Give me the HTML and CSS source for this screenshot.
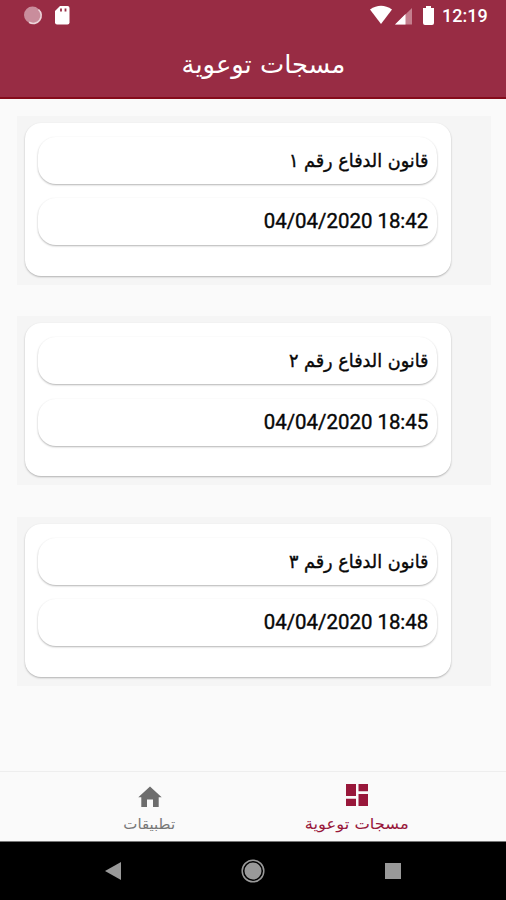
FILE: index.html
```html
<!DOCTYPE html>
<html lang="ar">
<head>
<meta charset="utf-8">
<title>مسجات توعوية</title>
<link rel="stylesheet" href="styles.css">
</head>
<body>
<header class="header">
  <div class="status">
    <svg class="status-left" width="52" height="24" viewBox="0 0 52 24"><circle cx="8.500" cy="15" r="8.500" fill="#c98d9c"/><path d="M14.500 9.500A8 8 0 0 1 5 22.300" fill="none" stroke="#ecd5da" stroke-width="1.6"/><path d="M36 6h7.500q2 0 2 2v14.500q0 2-2 2H33q-2 0-2-2V11Z" fill="#fff"/><path d="M37 8.500v3M41.500 8.500v3" stroke="#982c44" stroke-width="1.800"/></svg>
    <svg class="status-right" width="66" height="26" viewBox="0 0 66 26"><path d="M0 9.500Q11 2 22 9.500L11 24Z" fill="#fff"/><path d="M42 8v16.500H25Z" fill="#c47f8e"/><path d="M35.500 14v10.500H25Z" fill="#fff"/><path d="M56 6h5v2h3v15q0 2-2 2h-7q-2 0-2-2V8h3Z" fill="#fff"/></svg>
    <span class="clock">12:19</span>
  </div>
  <h1 class="title" dir="rtl"><span>مسجات توعوية</span></h1>
</header>
<main class="list">
  <section class="row"><article class="card">
    <div class="pill" dir="rtl"><span class="name">قانون الدفاع رقم ١</span></div>
    <div class="pill"><time class="date">04/04/2020 18:42</time></div>
  </article></section>
  <section class="row"><article class="card">
    <div class="pill" dir="rtl"><span class="name">قانون الدفاع رقم ٢</span></div>
    <div class="pill"><time class="date">04/04/2020 18:45</time></div>
  </article></section>
  <section class="row"><article class="card">
    <div class="pill" dir="rtl"><span class="name">قانون الدفاع رقم ٣</span></div>
    <div class="pill"><time class="date">04/04/2020 18:48</time></div>
  </article></section>
</main>
<nav class="tabs">
  <a class="tab home"><svg width="24" height="22" viewBox="0 0 24 22"><path d="M12 .5 .3 11.300h3V21H9v-7.500h6V21h5.700v-9.700h3Z" fill="#6d6d6d"/></svg><span dir="rtl">تطبيقات</span></a>
  <a class="tab active"><svg width="24" height="22" viewBox="0 0 24 22"><path d="M1 0h10v12H1ZM13.500 0h9.500v7.300h-9.500ZM1 14.700h10V22H1ZM13.500 10h9.500v12h-9.500Z" fill="#98173a"/></svg><span dir="rtl">مسجات توعوية</span></a>
</nav>
<footer class="system">
  <svg width="16" height="18" viewBox="0 0 16 18"><path d="M0 9 16 0v18Z" fill="#999"/></svg>
  <svg width="24" height="24" viewBox="0 0 24 24"><circle cx="12" cy="12" r="10.800" fill="none" stroke="#999" stroke-width="1.500"/><circle cx="12" cy="12" r="8.500" fill="#999"/></svg>
  <svg width="16" height="16" viewBox="0 0 16 16"><path d="M0 0h16v16H0Z" fill="#999"/></svg>
</footer>
</body>
</html>
```
FILE: styles.css
```css
* { box-sizing: border-box; }
body {
  margin: 0;
  height: 900px;
  display: flex;
  flex-direction: column;
  overflow: hidden;
  background: #fafafa;
  font-family: "DejaVu Sans", sans-serif;
}
svg { display: block; flex: none; }
.header {
  height: 99px;
  flex: none;
  background: #982c44;
  border-bottom: 2px solid #850b1b;
  color: #fff;
}
.status { display: flex; height: 32px; padding: 0 18px 0 24px; }
.status-left { overflow: visible; }
.status-right { margin-left: auto; }
.clock {
  margin-left: 6px;
  width: 46px;
  font: 500 18px/32px Roboto, sans-serif;
}
.title {
  margin: 0;
  padding-left: 21px;
  text-align: center;
  font-size: 25px;
  line-height: 66px;
  font-weight: 400;
}
.title span { display: inline-block; transform: scaleX(1.03); }
.list { flex: 1; padding: 16.5px 15px 0 17px; }
.row {
  height: 169px;
  margin-bottom: 31.5px;
  padding: 7px 8px;
  background: #f5f5f5;
}
.card {
  width: 426px;
  height: 153px;
  padding: 14px 14px 0 13px;
  border-radius: 16px;
  background: #fff;
  box-shadow: 0 1px 2px rgba(0, 0, 0, .28);
}
.pill {
  height: 47px;
  margin-bottom: 14.5px;
  padding: 0 9px;
  border-radius: 18px;
  background: #fff;
  box-shadow: 0 1px 2px rgba(0, 0, 0, .3);
  line-height: 47px;
  color: #080808;
  text-align: right;
}
.pill[dir="rtl"] { text-align: start; }
.name, .date { display: inline-block; transform-origin: right center; }
.name { font-size: 18.5px; transform: scaleX(.953); -webkit-text-stroke: .4px; }
.date { font: 400 21px/47px Roboto, sans-serif; transform: scaleX(.972); -webkit-text-stroke: .4px; }
.tabs {
  display: grid;
  grid-template-columns: 207px 207px;
  justify-content: center;
  height: 70px;
  flex: none;
  border-top: 1px solid #eee;
}
.tab {
  display: flex;
  flex-direction: column;
  align-items: center;
  padding-top: 14px;
  color: #777;
  font-size: 14px;
}
.tab span { margin-top: 6px; line-height: 20px; white-space: nowrap; transform: scaleX(1.07); }
.active { color: #98173a; font-size: 15px; padding-top: 12px; }
.active span { margin-top: 8px; transform: scaleX(1.09); }
.system {
  height: 59px;
  flex: none;
  display: flex;
  align-items: center;
  justify-content: space-between;
  padding: 0 105px;
  background: #000;
  border-top: 1px solid #777;
}
```
